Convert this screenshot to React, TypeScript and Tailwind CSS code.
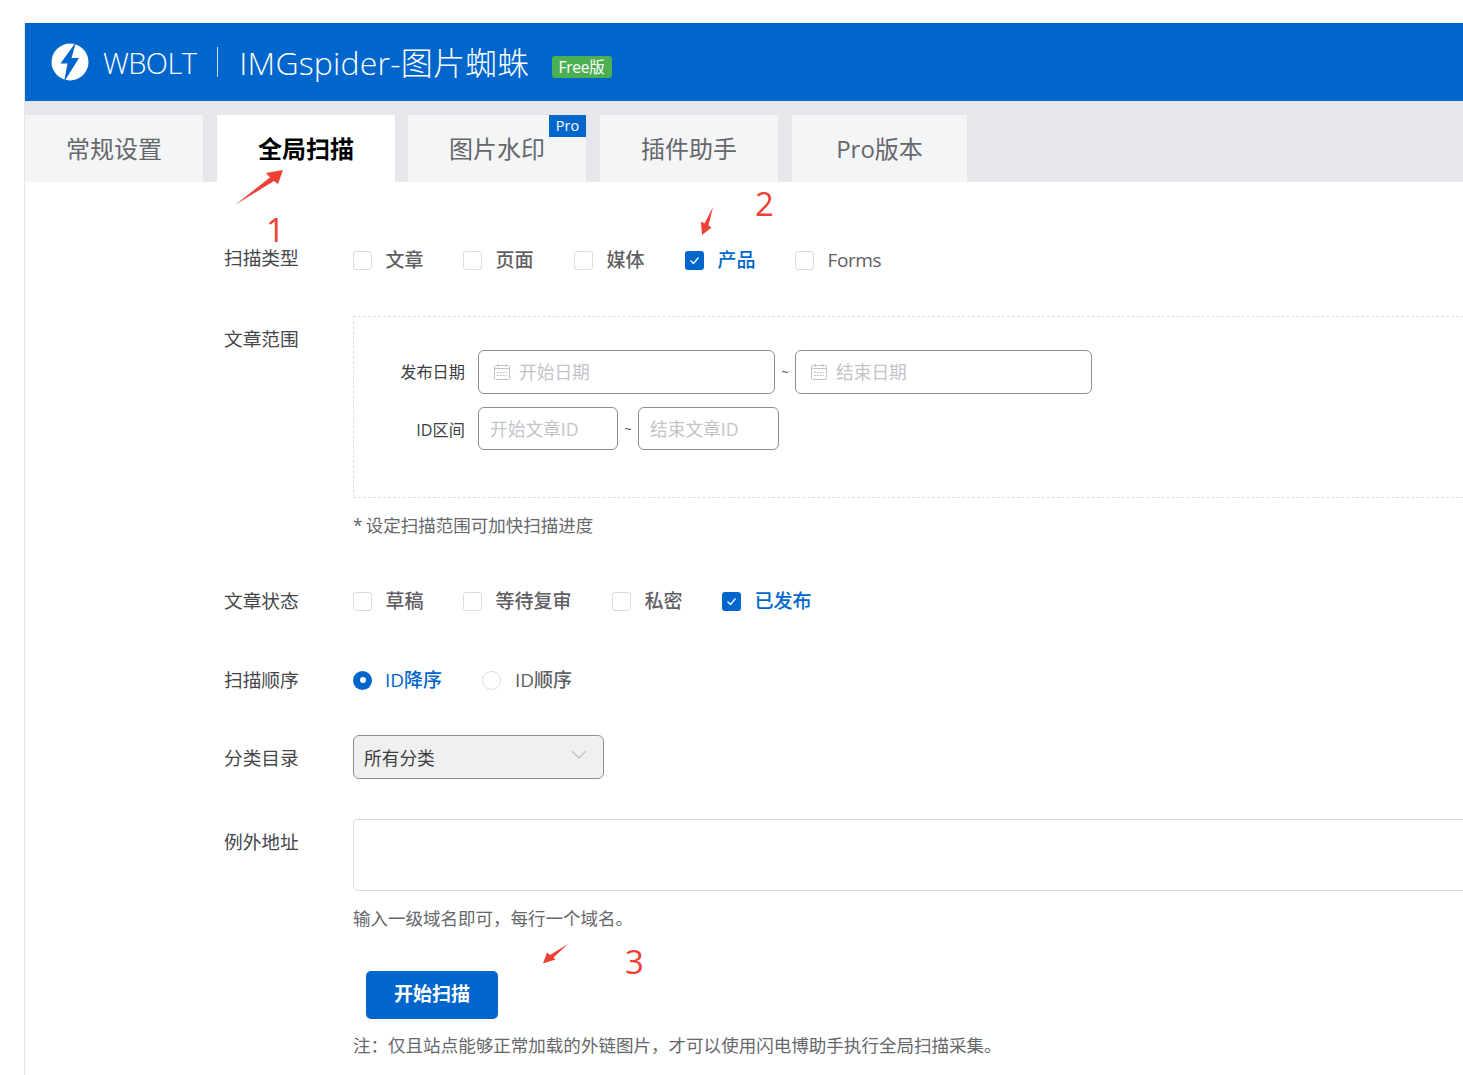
const font = "[font-family:'Open_Sans','Noto_Sans_CJK_SC',sans-serif]";

function Logo() {
  return (
    <svg width="38" height="38" viewBox="0 0 38 38" className="shrink-0">
      <circle cx="19" cy="19" r="18.500" fill="#fff" />
      <path fill="#0066cc" d="M25 -1 L9.500 20.500 H16.500 L13 39 L28 15 H20.500 Z" />
    </svg>
  );
}

function CalendarIcon() {
  return (
    <svg width="16" height="16" viewBox="0 0 16 16" fill="none" stroke="#c3c4c9" strokeWidth="1" className="shrink-0">
      <rect x="0.500" y="1.500" width="15" height="14" rx="1" />
      <path d="M0.500 4.500 H15.500 M4 0 V3 M12 0 V3" />
      <path d="M3 8.500 H13 M3 11.500 H13" strokeDasharray="2 1" />
    </svg>
  );
}

function Arrow({ className, w, h, d }: { className: string; w: number; h: number; d: string }) {
  return (
    <svg className={"absolute " + className} width={w} height={h} viewBox={`0 0 ${w} ${h}`} fill="#ee4035">
      <path d={d} />
    </svg>
  );
}

function Check({ label, checked, gap, textClass }: { label: string; checked?: boolean; gap: string; textClass?: string }) {
  return (
    <div className={"flex items-center " + gap}>
      {checked ? (
        <span className="w-[19px] h-[19px] rounded-[3px] bg-[#0066cc] flex items-center justify-center">
          <svg width="13" height="13" viewBox="0 0 13 13" fill="none" stroke="#fff" strokeWidth="1.200">
            <path d="M2.500 6.500 L5.500 9.500 L10.500 3.500" />
          </svg>
        </span>
      ) : (
        <span className="w-[19px] h-[19px] rounded-[3px] border border-[#dcdcde] bg-white" />
      )}
      <span className={"ml-[13.500px] text-[19px] font-medium " + (checked ? "text-[#0066cc] " : "text-[#5f6064] ") + (textClass ?? "")}>
        {label}
      </span>
    </div>
  );
}

function Row({ label, className, labelClass, children }: { label: string; className: string; labelClass?: string; children: React.ReactNode }) {
  return (
    <div className={"flex " + className}>
      <div className={"w-[129px] shrink-0 text-[18.700px] leading-[26px] text-[#45464a] " + (labelClass ?? "")}>{label}</div>
      {children}
    </div>
  );
}

function Field({ w, h, icon, text }: { w: string; h: string; icon?: boolean; text: string }) {
  return (
    <div className={"flex items-center border border-[#8c8f94] rounded-[6px] bg-white " + w + " " + h + (icon ? " pl-[15px]" : " pl-[11px] pt-[1px]")}>
      {icon && <CalendarIcon />}
      <span className={"text-[17.700px] text-[#c3c4c9] " + (icon ? "ml-[9px]" : "")}>{text}</span>
    </div>
  );
}

export default function App() {
  const tabs = [
    { name: "常规设置", w: "w-[178px]" },
    { name: "全局扫描", w: "w-[178px]", active: true },
    { name: "图片水印", w: "w-[178px] -ml-[1px]", pro: true },
    { name: "插件助手", w: "w-[178px]" },
    { name: "Pro版本", w: "w-[175px]" },
  ];

  return (
    <div className={"h-[1075px] overflow-hidden bg-white pl-[24px] pt-[23px] relative " + font}>
      <div className="w-[1500px] border-l border-[#e6e7ea] h-full">
        <header className="h-[78px] bg-[#0066cc] flex items-center pl-[26px] text-white">
          <Logo />
          <span className="ml-[14px] mt-[1px] text-[29px] tracking-[-0.6px] font-light">WBOLT</span>
          <span className="ml-[21px] w-px h-[30px] bg-white/80" />
          <span className="ml-[21px] mt-[2px] text-[32px] font-light leading-none tracking-[0.2px]">IMGspider-图片蜘蛛</span>
          <span className="ml-[22px] mt-[10px] h-[22px] w-[60px] rounded-[3px] bg-[#4caf50] text-[15.500px] leading-[22px] text-center tracking-[-0.2px]">
            Free版
          </span>
        </header>

        <nav className="h-[81px] bg-[#e6e7ea] pt-[14px] flex gap-[14px]">
          {tabs.map((t) => (
            <div
              key={t.name}
              className={
                "relative h-[67px] flex items-center justify-center text-[24px] " +
                t.w +
                (t.active ? " bg-white text-black font-bold" : " bg-[#f4f5f7] text-[#66676b]")
              }
            >
              {t.name}
              {t.pro && (
                <span className="absolute top-0 right-0 w-[37px] h-[22px] bg-[#0066cc] text-white text-[14.500px] leading-[22px] text-center">
                  Pro
                </span>
              )}
            </div>
          ))}
        </nav>

        <main className="pl-[199px]">
          <Row label="扫描类型" className="mt-[63px] items-center h-[26px]">
            <div className="flex items-center mt-[4px]">
              <Check label="文章" gap="w-[110px]" />
              <Check label="页面" gap="w-[111px]" />
              <Check label="媒体" gap="w-[111px]" />
              <Check label="产品" checked gap="w-[110px]" />
              <Check label="Forms" gap="" textClass="tracking-[-0.4px]" />
            </div>
          </Row>

          <Row label="文章范围" className="mt-[45px]" labelClass="mt-[10px]">
            <div className="flex-1">
              <div className="h-[182px] border border-dashed border-[#dedfe2] pt-[33px] pl-[46px]">
                <div className="flex items-center h-[44px]">
                  <span className="w-[65px] pt-[1px] text-right text-[16.200px] whitespace-nowrap text-[#3d3e42]">发布日期</span>
                  <span className="ml-[13px]">
                    <Field w="w-[297px]" h="h-[44px]" icon text="开始日期" />
                  </span>
                  <span className="w-[20px] pt-[1px] text-center text-[13px] text-[#55565a]">~</span>
                  <Field w="w-[297px]" h="h-[44px]" icon text="结束日期" />
                </div>
                <div className="flex items-center h-[43px] mt-[13px]">
                  <span className="w-[65px] pt-[3px] text-right text-[16.200px] whitespace-nowrap text-[#3d3e42]">ID区间</span>
                  <span className="ml-[13px]">
                    <Field w="w-[140px]" h="h-[43px]" text="开始文章ID" />
                  </span>
                  <span className="w-[20px] pt-[3px] text-center text-[13px] text-[#55565a]">~</span>
                  <Field w="w-[141px]" h="h-[43px]" text="结束文章ID" />
                </div>
              </div>
              <p className="mt-[14px] text-[17.500px] leading-[26px] text-[#66676b]">
                <span className="mr-[-1.500px]">*</span> 设定扫描范围可加快扫描进度
              </p>
            </div>
          </Row>

          <Row label="文章状态" className="mt-[50px] items-center h-[26px]">
            <div className="flex items-center">
              <Check label="草稿" gap="w-[110px]" />
              <Check label="等待复审" gap="w-[149px]" />
              <Check label="私密" gap="w-[110px]" />
              <Check label="已发布" checked gap="" />
            </div>
          </Row>

          <Row label="扫描顺序" className="mt-[53px] items-center h-[26px]">
            <div className="flex items-center">
              <div className="flex items-center w-[129px]">
                <span className="w-[19px] h-[19px] rounded-full bg-[#0066cc] flex items-center justify-center">
                  <span className="w-[6px] h-[6px] rounded-full bg-white" />
                </span>
                <span className="ml-[13px] text-[19px] font-medium text-[#0066cc]">ID降序</span>
              </div>
              <div className="flex items-center">
                <span className="w-[19px] h-[19px] rounded-full border border-[#dcdcde]" />
                <span className="ml-[14px] text-[19px] font-medium text-[#5f6064]">ID顺序</span>
              </div>
            </div>
          </Row>

          <Row label="分类目录" className="mt-[42px] items-center h-[44px]" labelClass="mt-[2px]">
            <div className="w-[251px] h-[44px] rounded-[6px] border border-[#8c8f94] bg-[#f0f0f1] flex items-center justify-between pl-[10px] pr-[16px] text-[17.700px] text-[#3d3e42]">
              <span className="pt-[2px]">所有分类</span>
              <svg width="16" height="9" viewBox="0 0 16 9" fill="none" stroke="#c3c4c9" strokeWidth="1.300" className="-mt-[6px]">
                <path d="M1 1 L8 8 L15 1" />
              </svg>
            </div>
          </Row>

          <Row label="例外地址" className="mt-[40px]" labelClass="mt-[10px]">
            <div className="flex-1">
              <div className="h-[72px] rounded-l-[4px] border border-[#dcdcde] bg-white" />
              <p className="mt-[14px] text-[17.500px] leading-[26px] text-[#66676b]">输入一级域名即可，每行一个域名。</p>
              <button className="block mt-[40px] ml-[13px] w-[132px] h-[48px] pb-[2px] rounded-[5px] bg-[#0066cc] text-white text-[19px] font-semibold">
                开始扫描
              </button>
              <p className="mt-[13px] text-[17.540px] leading-[26px] text-[#66676b]">
                注：仅且站点能够正常加载的外链图片，才可以使用闪电博助手执行全局扫描采集。
              </p>
            </div>
          </Row>
        </main>
      </div>

      {/* annotations drawn over the page */}
      <Arrow className="left-[233px] top-[168px]" w={54} h={40} d="M2 37 L37 9.500 L33 5 L50 2 L45 16 L41 13 Z" />
      <Arrow className="left-[698px] top-[205px]" w={18} h={32} d="M15 2 L10.500 20.500 L13.500 22.500 L4 30 L3 16.500 L6.500 18.500 Z" />
      <Arrow className="left-[540px] top-[942px]" w={30} h={24} d="M28 2 L13.500 15.500 L15.500 17.500 L3 21.500 L7 10.500 L10 13 Z" />
      <span className="absolute left-[266px] top-[216px] text-[33px] leading-[28px] text-[#ee4035]">1</span>
      <span className="absolute left-[755px] top-[190px] text-[33px] leading-[28px] text-[#ee4035]">2</span>
      <span className="absolute left-[625px] top-[948px] text-[33px] leading-[28px] text-[#ee4035]">3</span>
    </div>
  );
}
